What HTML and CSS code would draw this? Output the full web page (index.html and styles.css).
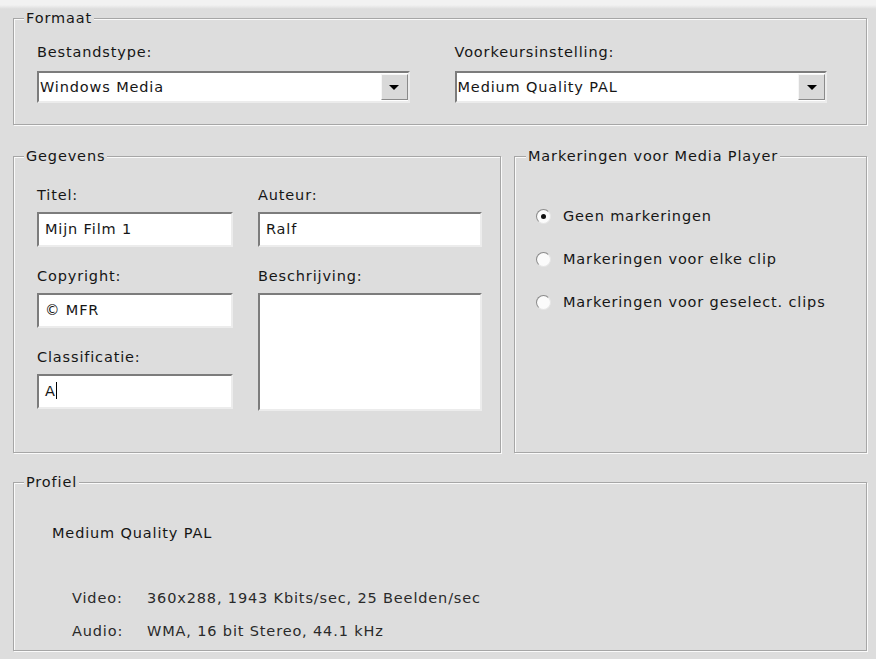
FILE: index.html
```html
<!DOCTYPE html>
<html lang="nl">
<head>
    <meta charset="UTF-8">
    <meta name="viewport" content="width=device-width, initial-scale=1.0">
    <title>Film opslaan - Windows Media</title>

    <link rel="stylesheet" href="styles.css">
</head>
<body>
    <div class="dialog">

        <!-- Formaat -->
        <fieldset class="group group-format">
            <legend>Formaat</legend>
            <div class="format-row">
                <div class="control">
                    <label>Bestandstype:</label>
                    <div class="select">
                        <span class="select-text">Windows Media</span>
                        <span class="select-btn"><span class="arrow"></span></span>
                    </div>
                </div>
                <div class="control">
                    <label>Voorkeursinstelling:</label>
                    <div class="select">
                        <span class="select-text">Medium Quality PAL</span>
                        <span class="select-btn"><span class="arrow"></span></span>
                    </div>
                </div>
            </div>
        </fieldset>

        <div class="middle">
            <!-- Gegevens -->
            <fieldset class="group group-info">
                <legend>Gegevens</legend>
                <div class="info-grid">
                    <div class="info-col">
                        <label>Titel:</label>
                        <div class="field">Mijn Film 1</div>
                        <label>Copyright:</label>
                        <div class="field">&copy; MFR</div>
                        <label>Classificatie:</label>
                        <div class="field">A<span class="caret"></span></div>
                    </div>
                    <div class="info-col">
                        <label>Auteur:</label>
                        <div class="field">Ralf</div>
                        <label class="label-desc">Beschrijving:</label>
                        <div class="field field-area"></div>
                    </div>
                </div>
            </fieldset>

            <!-- Markeringen -->
            <fieldset class="group group-markers">
                <legend>Markeringen voor Media Player</legend>
                <div class="radio-list">
                    <div class="radio-row"><span class="radio checked"></span>Geen markeringen</div>
                    <div class="radio-row"><span class="radio"></span>Markeringen voor elke clip</div>
                    <div class="radio-row"><span class="radio"></span>Markeringen voor geselect. clips</div>
                </div>
            </fieldset>
        </div>

        <!-- Profiel -->
        <fieldset class="group group-profile">
            <legend>Profiel</legend>
            <div class="profile-name">Medium Quality PAL</div>
            <div class="specs">
                <span>Video:</span><span>360x288, 1943 Kbits/sec, 25 Beelden/sec</span>
                <span>Audio:</span><span>WMA, 16 bit Stereo, 44.1 kHz</span>
            </div>
        </fieldset>

    </div>
</body>
</html>
```

FILE: styles.css
```css
* {
    margin: 0;
    padding: 0;
    box-sizing: border-box;
}

body {
    font-family: "DejaVu Sans", Tahoma, sans-serif;
    font-size: 14.5px;
    letter-spacing: 0.85px;
    color: #161616;
    background: linear-gradient(#f2f2f2 0, #f2f2f2 5px, #dddddd 9px);
    min-height: 659px;
}

.dialog {
    width: 876px;
    padding: 9px 9px 0 13px;
}

/* Group boxes (etched border) */
.group {
    border: 1px solid #a6a6a6;
    box-shadow: inset 1px 1px 0 #fafafa, 1px 1px 0 #fafafa;
    min-width: 0;
}

.group legend {
    line-height: 18px;
    padding: 0 2px;
    background: #dddddd;
}

label {
    display: block;
    line-height: 18px;
}

/* Formaat */
.group-format {
    padding: 16px 39px 21px 23px;
}

.group-format legend {
    margin-left: -13px;
}

.format-row {
    display: grid;
    grid-template-columns: 1fr 1fr;
    gap: 45px;
}

.format-row label {
    margin-bottom: 10px;
}

.select {
    height: 32px;
    display: flex;
    align-items: center;
    background: #fff;
    border: 2px solid;
    border-color: #7c7c7c #ececec #ececec #7c7c7c;
    padding-left: 1px;
}

.select-btn {
    margin-left: auto;
    width: 27px;
    height: 26px;
    background: #d9d9d9;
    border: 1px solid;
    border-color: #f6f6f6 #8a8a8a #8a8a8a #f6f6f6;
    display: flex;
    align-items: center;
    justify-content: center;
}

.arrow {
    width: 0;
    height: 0;
    border-left: 5px solid transparent;
    border-right: 5px solid transparent;
    border-top: 5px solid #000;
}

/* Middle row */
.middle {
    display: grid;
    grid-template-columns: 488px 353px;
    gap: 13px;
    margin-top: 22px;
    height: 306px;
}

.group-info {
    padding: 21px 17px 0 23px;
}

.group-info legend {
    margin-left: -13px;
}

.info-grid {
    display: grid;
    grid-template-columns: 196px 224px;
    gap: 25px;
}

.info-col label {
    margin-bottom: 8px;
}

.field {
    height: 35px;
    background: #fff;
    border: 2px solid;
    border-color: #7c7c7c #ececec #ececec #7c7c7c;
    padding: 0 6px;
    line-height: 31px;
    margin-bottom: 20px;
    white-space: nowrap;
}

.field-area {
    height: 118px;
    margin-top: 4px;
}

.label-desc {
    margin-top: 3px;
}

.caret {
    display: inline-block;
    width: 1px;
    height: 17px;
    background: #000;
    vertical-align: -3px;
    margin-left: 0;
}

/* Markeringen */
.group-markers {
    padding: 38px 10px 0 21px;
}

.group-markers legend {
    margin-left: -10px;
}

.radio-list {
    display: flex;
    flex-direction: column;
    gap: 17px;
}

.radio-row {
    display: flex;
    align-items: center;
    gap: 12px;
    height: 26px;
}

.radio {
    width: 15px;
    height: 15px;
    border-radius: 50%;
    background: #fbfbfb;
    border: 1px solid;
    border-color: #8a8a8a #e6e6e6 #e6e6e6 #8a8a8a;
    display: flex;
    align-items: center;
    justify-content: center;
}

.radio.checked::after {
    content: "";
    width: 5px;
    height: 5px;
    border-radius: 50%;
    background: #111;
}

/* Profiel */
.group-profile {
    margin-top: 20px;
    padding: 33px 20px 10px 38px;
}

.group-profile legend {
    margin-left: -28px;
}

.profile-name {
    line-height: 18px;
    margin-bottom: 47px;
}

.specs {
    display: grid;
    grid-template-columns: 75px 1fr;
    row-gap: 15px;
    line-height: 18px;
    padding-left: 20px;
    color: #2a2a2a;
}
```
